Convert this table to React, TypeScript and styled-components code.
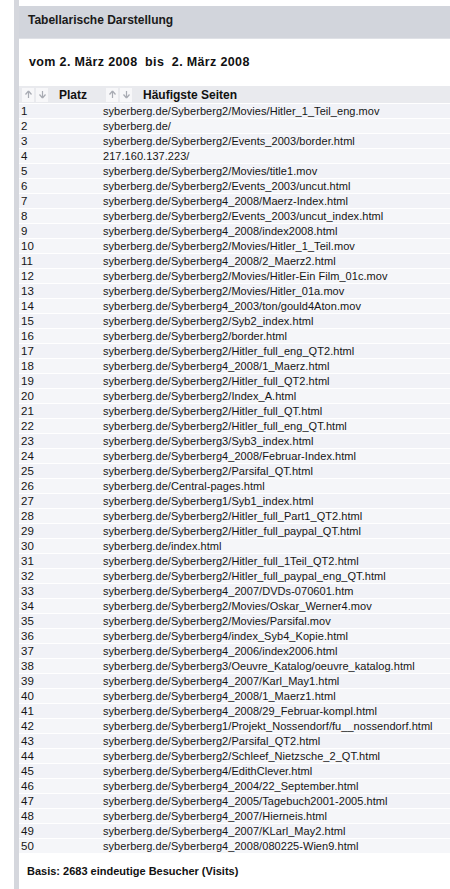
import React from 'react';
import styled, { createGlobalStyle } from 'styled-components';

const pages = [
  'syberberg.de/Syberberg2/Movies/Hitler_1_Teil_eng.mov',
  'syberberg.de/',
  'syberberg.de/Syberberg2/Events_2003/border.html',
  '217.160.137.223/',
  'syberberg.de/Syberberg2/Movies/title1.mov',
  'syberberg.de/Syberberg2/Events_2003/uncut.html',
  'syberberg.de/Syberberg4_2008/Maerz-Index.html',
  'syberberg.de/Syberberg2/Events_2003/uncut_index.html',
  'syberberg.de/Syberberg4_2008/index2008.html',
  'syberberg.de/Syberberg2/Movies/Hitler_1_Teil.mov',
  'syberberg.de/Syberberg4_2008/2_Maerz2.html',
  'syberberg.de/Syberberg2/Movies/Hitler-Ein Film_01c.mov',
  'syberberg.de/Syberberg2/Movies/Hitler_01a.mov',
  'syberberg.de/Syberberg4_2003/ton/gould4Aton.mov',
  'syberberg.de/Syberberg2/Syb2_index.html',
  'syberberg.de/Syberberg2/border.html',
  'syberberg.de/Syberberg2/Hitler_full_eng_QT2.html',
  'syberberg.de/Syberberg4_2008/1_Maerz.html',
  'syberberg.de/Syberberg2/Hitler_full_QT2.html',
  'syberberg.de/Syberberg2/Index_A.html',
  'syberberg.de/Syberberg2/Hitler_full_QT.html',
  'syberberg.de/Syberberg2/Hitler_full_eng_QT.html',
  'syberberg.de/Syberberg3/Syb3_index.html',
  'syberberg.de/Syberberg4_2008/Februar-Index.html',
  'syberberg.de/Syberberg2/Parsifal_QT.html',
  'syberberg.de/Central-pages.html',
  'syberberg.de/Syberberg1/Syb1_index.html',
  'syberberg.de/Syberberg2/Hitler_full_Part1_QT2.html',
  'syberberg.de/Syberberg2/Hitler_full_paypal_QT.html',
  'syberberg.de/index.html',
  'syberberg.de/Syberberg2/Hitler_full_1Teil_QT2.html',
  'syberberg.de/Syberberg2/Hitler_full_paypal_eng_QT.html',
  'syberberg.de/Syberberg4_2007/DVDs-070601.htm',
  'syberberg.de/Syberberg2/Movies/Oskar_Werner4.mov',
  'syberberg.de/Syberberg2/Movies/Parsifal.mov',
  'syberberg.de/Syberberg4/index_Syb4_Kopie.html',
  'syberberg.de/Syberberg4_2006/index2006.html',
  'syberberg.de/Syberberg3/Oeuvre_Katalog/oeuvre_katalog.html',
  'syberberg.de/Syberberg4_2007/Karl_May1.html',
  'syberberg.de/Syberberg4_2008/1_Maerz1.html',
  'syberberg.de/Syberberg4_2008/29_Februar-kompl.html',
  'syberberg.de/Syberberg1/Projekt_Nossendorf/fu__nossendorf.html',
  'syberberg.de/Syberberg2/Parsifal_QT2.html',
  'syberberg.de/Syberberg2/Schleef_Nietzsche_2_QT.html',
  'syberberg.de/Syberberg4/EdithClever.html',
  'syberberg.de/Syberberg4_2004/22_September.html',
  'syberberg.de/Syberberg4_2005/Tagebuch2001-2005.html',
  'syberberg.de/Syberberg4_2007/Hierneis.html',
  'syberberg.de/Syberberg4_2007/KLarl_May2.html',
  'syberberg.de/Syberberg4_2008/080225-Wien9.html',
];

const GlobalStyle = createGlobalStyle`
  html, body {
    margin: 0;
    padding: 0;
    background: #ffffff;
  }
  body {
    font-family: 'Liberation Sans', Arial, sans-serif;
    color: #111111;
  }
`;

const SortIcons = () => (
  <Sorter>
    <SortBox>
      <svg width="9" height="9" viewBox="0 0 9 9">
        <path d="M4.5 1 L1.5 4.5 M4.5 1 L7.5 4.5 M4.5 1 L4.5 8" stroke="#a8abb3" strokeWidth="1.2" fill="none" />
      </svg>
    </SortBox>
    <SortBox>
      <svg width="9" height="9" viewBox="0 0 9 9">
        <path d="M4.5 8 L1.5 4.5 M4.5 8 L7.5 4.5 M4.5 8 L4.5 1" stroke="#a8abb3" strokeWidth="1.2" fill="none" />
      </svg>
    </SortBox>
  </Sorter>
);

const App: React.FC = () => {
  return (
    <Page>
      <GlobalStyle />
      <Panel>
        <TitleBar>Tabellarische Darstellung</TitleBar>
        <DateLine>vom 2. März 2008&nbsp;&nbsp;bis&nbsp; 2. März 2008</DateLine>
        <Table>
          <HeadRow>
            <HeadCell>
              <SortIcons />
              <span>Platz</span>
            </HeadCell>
            <HeadCell>
              <SortIcons />
              <span>Häufigste Seiten</span>
            </HeadCell>
          </HeadRow>
          {pages.map((page, i) => (
            <Row key={i} odd={i % 2 === 0}>
              <RankCell>{i + 1}</RankCell>
              <PageCell>{page}</PageCell>
            </Row>
          ))}
        </Table>
        <Footer>Basis: 2683 eindeutige Besucher (Visits)</Footer>
      </Panel>
    </Page>
  );
};

export default App;

const Page = styled.div`
  width: 450px;
  height: 889px;
  padding-left: 14px;
  box-sizing: border-box;
  overflow: hidden;
`;

const Panel = styled.div`
  height: 100%;
  border-left: 5px solid #d5d7dd;
  padding-top: 6px;
  box-sizing: border-box;
`;

const TitleBar = styled.div`
  height: 33px;
  background: #d2d5dc;
  border-bottom: 1px solid #dfe1e6;
  padding-left: 9px;
  display: flex;
  align-items: center;
  padding-bottom: 5px;
  box-sizing: border-box;
  font-size: 12px;
  font-weight: 700;
  color: #1a1a1a;
`;

const DateLine = styled.div`
  padding: 16px 0 0 10px;
  height: 47px;
  box-sizing: border-box;
  font-size: 12.5px;
  font-weight: 700;
  letter-spacing: 0.35px;
  white-space: pre;
  color: #111;
`;

const Table = styled.div`
  display: flex;
  flex-direction: column;
`;

const HeadRow = styled.div`
  display: grid;
  grid-template-columns: 84px 1fr;
  height: 17px;
  background: #e9eaee;
`;

const HeadCell = styled.div`
  display: flex;
  align-items: center;
  gap: 11px;
  padding-left: 3px;
  font-size: 12px;
  font-weight: 700;
  color: #111;
`;

const Sorter = styled.div`
  display: flex;
  gap: 2px;
`;

const SortBox = styled.div`
  width: 12px;
  height: 14px;
  background: #f7f7f9;
  display: flex;
  align-items: center;
  justify-content: center;
`;

const Row = styled.div<{ odd: boolean }>`
  display: grid;
  grid-template-columns: 84px 1fr;
  height: 15px;
  box-sizing: border-box;
  border-top: 1px solid #ffffff;
  background: ${(p) => (p.odd ? '#f1f2f7' : '#f5f6f9')};
  font-size: 11px;
  line-height: 14px;
  color: #151515;
`;

const RankCell = styled.div`
  padding-left: 2px;
  font-size: 11.5px;
`;

const PageCell = styled.div`
  white-space: nowrap;
  letter-spacing: 0.05px;
`;

const Footer = styled.div`
  padding: 12px 0 0 8px;
  font-size: 11px;
  font-weight: 700;
  color: #111;
`;
